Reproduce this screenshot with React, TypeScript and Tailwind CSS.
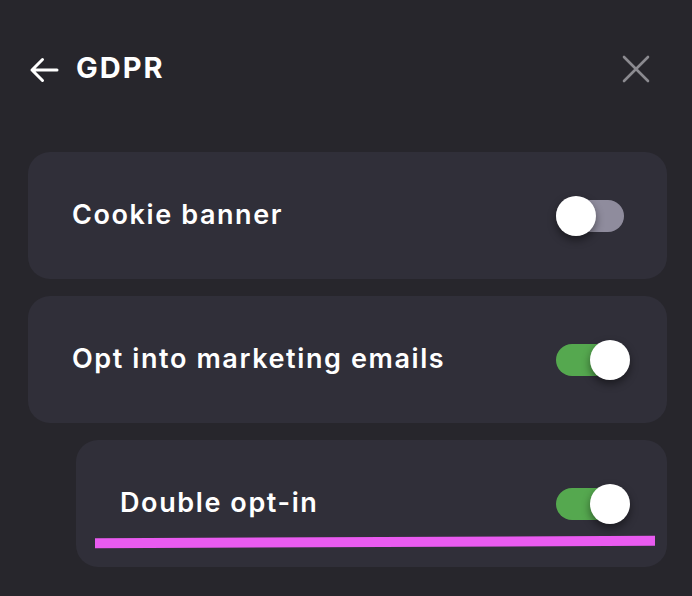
import React, { useState } from "react";

function Toggle({ on }: { on: boolean }) {
  return (
    <div className="relative h-[32px] w-[68px] shrink-0">
      <div
        className={
          "absolute inset-0 rounded-full " + (on ? "bg-[#55a84f]" : "bg-[#8f8c9d]")
        }
      />
      <div
        className={
          "absolute top-[-4px] h-[40px] w-[40px] rounded-full bg-white shadow-[0_4px_8px_rgba(0,0,0,0.45)] " +
          (on ? "left-[34px]" : "left-0")
        }
      />
    </div>
  );
}

function Card({
  label,
  on,
  indent,
  underline,
}: {
  label: string;
  on: boolean;
  indent?: boolean;
  underline?: boolean;
}) {
  return (
    <div
      className={
        "relative flex h-[127px] items-center justify-between rounded-[22px] bg-[#302f39] pl-[44px] pr-[43px] " +
        (indent ? "ml-[48px]" : "")
      }
    >
      <span className="text-[27px] font-semibold tracking-[1.6px] text-white">
        {label}
      </span>
      <div className="mt-[1px]">
        <Toggle on={on} />
      </div>
      {underline && (
        <div className="absolute left-[19px] right-[12px] top-[97px] h-[10px] -rotate-[0.25deg] bg-[#e95bf0]" />
      )}
    </div>
  );
}

export default function App() {
  const [state] = useState({ cookie: false, marketing: true, double: true });
  return (
    <div
      className="h-[596px] w-[692px] overflow-hidden bg-[#27262c] pl-[28px] pr-[25px]"
      style={{ fontFamily: "Inter, 'Noto Sans', sans-serif" }}
    >
      <div className="flex h-[152px] items-start justify-between pt-[50px]">
        <div className="flex items-center">
          <svg width="30" height="28" viewBox="0 0 30 28" className="mt-[4px] ml-[1px]">
            <path
              d="M28 14H3M13.5 3.5L3 14l10.5 10.5"
              fill="none"
              stroke="white"
              strokeWidth="3"
              strokeLinecap="round"
              strokeLinejoin="round"
            />
          </svg>
          <span className="ml-[17px] text-[29px] font-bold leading-[36px] tracking-[2px] text-white">
            GDPR
          </span>
        </div>
        <svg width="28" height="28" viewBox="0 0 28 28" className="mr-[17px] mt-[5px]">
          <path
            d="M2 2l24 24M26 2L2 26"
            fill="none"
            stroke="#8b8a90"
            strokeWidth="2.6"
            strokeLinecap="round"
          />
        </svg>
      </div>
      <div className="flex flex-col gap-[17px]">
        <Card label="Cookie banner" on={state.cookie} />
        <Card label="Opt into marketing emails" on={state.marketing} />
        <Card label="Double opt-in" on={state.double} indent underline />
      </div>
    </div>
  );
}
